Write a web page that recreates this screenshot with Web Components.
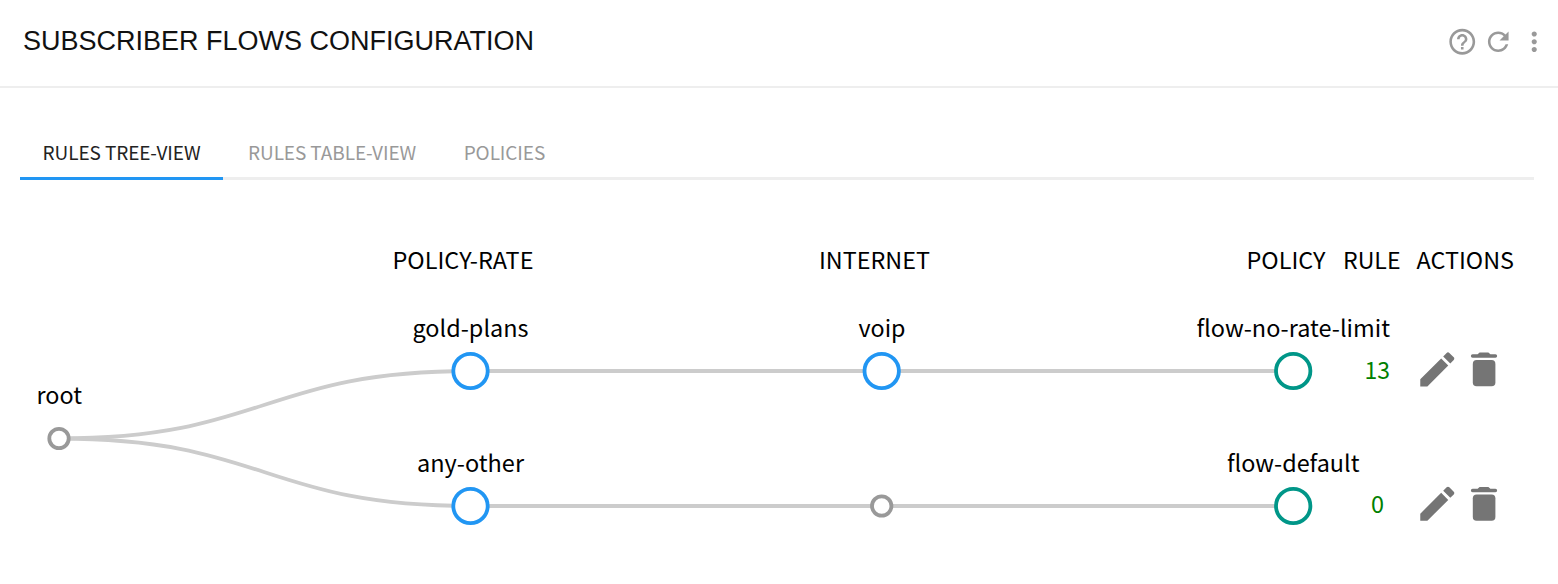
<!DOCTYPE html>
<html lang="en">
<head>
<meta charset="utf-8">
<title>Subscriber Flows Configuration</title>
<style>
  body {
    margin: 0;
    background: #fff;
    font-family: "Noto Sans CJK SC", "Open Sans", sans-serif;
  }
</style>
</head>
<body>
<flows-page>
  <page-header slot="header" heading="SUBSCRIBER FLOWS CONFIGURATION">
    <icon-button name="help" label="Help"></icon-button>
    <icon-button name="refresh" label="Refresh"></icon-button>
    <icon-button name="more" label="More"></icon-button>
  </page-header>
  <tab-bar slot="tabs">
    <tab-item active>RULES TREE-VIEW</tab-item>
    <tab-item>RULES TABLE-VIEW</tab-item>
    <tab-item>POLICIES</tab-item>
  </tab-bar>
  <rules-tree></rules-tree>
</flows-page>

<script>
const ICONS = {
  help: "M11 18h2v-2h-2v2zm1-16C6.48 2 2 6.48 2 12s4.48 10 10 10 10-4.48 10-10S17.52 2 12 2zm0 18c-4.41 0-8-3.59-8-8s3.59-8 8-8 8 3.59 8 8-3.59 8-8 8zm0-14c-2.21 0-4 1.79-4 4h2c0-1.1.9-2 2-2s2 .9 2 2c0 2-3 1.75-3 5h2c0-2.25 3-2.5 3-5 0-2.21-1.79-4-4-4z",
  refresh: "M17.65 6.35C16.2 4.9 14.21 4 12 4c-4.42 0-7.99 3.58-7.99 8s3.57 8 7.99 8c3.73 0 6.84-2.55 7.73-6h-2.08c-.82 2.33-3.04 4-5.65 4-3.31 0-6-2.69-6-6s2.69-6 6-6c1.66 0 3.14.69 4.22 1.78L13 11h7V4l-2.35 2.35z",
  more: "M12 8c1.1 0 2-.9 2-2s-.9-2-2-2-2 .9-2 2 .9 2 2 2zm0 2c-1.1 0-2 .9-2 2s.9 2 2 2 2-.9 2-2-.9-2-2-2zm0 6c-1.1 0-2 .9-2 2s.9 2 2 2 2-.9 2-2-.9-2-2-2z",
};

class FlowsPage extends HTMLElement {
  constructor() {
    super();
    this.attachShadow({ mode: "open" }).innerHTML = `
      <style>
        :host { display: flex; flex-direction: column; height: 584px; overflow: hidden; }
        main { display: flex; flex-direction: column; padding-top: 36px; }
      </style>
      <slot name="header"></slot>
      <main>
        <slot name="tabs"></slot>
        <slot></slot>
      </main>
    `;
  }
}

class PageHeader extends HTMLElement {
  constructor() {
    super();
    this.attachShadow({ mode: "open" }).innerHTML = `
      <style>
        :host {
          display: flex;
          align-items: center;
          justify-content: space-between;
          box-sizing: border-box;
          height: 88px;
          padding: 0 8px 4px 23px;
          border-bottom: 2px solid #eee;
        }
        h1 {
          margin: 0;
          color: #111;
          font: 400 27px/32px "Liberation Sans", Arial, sans-serif;
          white-space: nowrap;
        }
        .actions { display: flex; gap: 5px; padding-top: 1px; }
      </style>
      <h1>${this.getAttribute("heading")}</h1>
      <div class="actions"><slot></slot></div>
    `;
  }
}

class IconButton extends HTMLElement {
  constructor() {
    super();
    this.attachShadow({ mode: "open" }).innerHTML = `
      <style>
        :host { display: block; width: 31px; height: 31px; cursor: pointer; }
        svg { display: block; fill: #999; }
      </style>
      <svg width="31" height="31" viewBox="0.2 -0.2 24 24" role="img" aria-label="${this.getAttribute("label")}">
        <path d="${ICONS[this.getAttribute("name")]}"/>
      </svg>
    `;
  }
}

class TabBar extends HTMLElement {
  constructor() {
    super();
    this.attachShadow({ mode: "open" }).innerHTML = `
      <style>
        :host {
          display: flex;
          gap: 2.4px;
          box-sizing: border-box;
          height: 56px;
          margin: 0 24px 0 20px;
          box-shadow: inset 0 -3px #eee;
        }
      </style>
      <slot></slot>
    `;
  }
}

class TabItem extends HTMLElement {
  constructor() {
    super();
    this.attachShadow({ mode: "open" }).innerHTML = `
      <style>
        :host {
          display: flex;
          align-items: center;
          box-sizing: border-box;
          height: 56px;
          padding: 3px 22.6px 0;
          border-bottom: 3px solid transparent;
          color: #999;
          font-size: 19px;
          line-height: 28px;
          letter-spacing: -0.09px;
          white-space: nowrap;
          cursor: pointer;
        }
        :host([active]) { color: #222; border-color: #2196f3; }
      </style>
      <slot></slot>
    `;
  }
}

const COLUMNS = [
  { text: "POLICY-RATE", x: 392.5, width: 141 },
  { text: "INTERNET", x: 819, width: 111 },
  { text: "POLICY", x: 1246.5, width: 79 },
  { text: "RULE", x: 1343, width: 57.5 },
  { text: "ACTIONS", x: 1416.5, width: 97.5 },
];

const NODES = [
  { text: "root", x: 59, y: 438.5, tx: 36.5, ty: 404, width: 45.5 },
  { text: "gold-plans", x: 470.5, y: 371, tx: 412.5, ty: 337, width: 116, kind: "match" },
  { text: "voip", x: 881.7, y: 371, tx: 858.5, ty: 337, width: 47, kind: "match" },
  { text: "flow-no-rate-limit", x: 1293.2, y: 371, tx: 1196.5, ty: 337, width: 193.5, kind: "policy" },
  { text: "any-other", x: 470.5, y: 506, tx: 417, ty: 472, width: 107, kind: "match" },
  { x: 881.7, y: 506 },
  { text: "flow-default", x: 1293.2, y: 506, tx: 1227, ty: 472, width: 132.5, kind: "policy" },
];

const LINKS = [[0, 1], [1, 2], [2, 3], [0, 4], [4, 5], [5, 6]];

const RULES = [
  { count: "13", x: 1364.5, y: 371, width: 25.5 },
  { count: "0", x: 1371, y: 505.4, width: 13 },
];

class RulesTree extends HTMLElement {
  constructor() {
    super();
    this.attachShadow({ mode: "open" });
  }

  connectedCallback() {
    this._render();
  }

  _text(text, x, y, width, clase = "") {
    return `<text class="${clase}" x="${x}" y="${y}" textLength="${width}" lengthAdjust="spacingAndGlyphs">${text}</text>`;
  }

  _link([from, to]) {
    const a = NODES[from];
    const b = NODES[to];
    const mid = (a.x + b.x) / 2;
    return `<path class="link" d="M${a.x} ${a.y}C${mid} ${a.y} ${mid} ${b.y} ${b.x} ${b.y}"/>`;
  }

  _node(n) {
    const r = n.kind ? 17.2 : 9.7;
    const label = n.text ? this._text(n.text, n.tx, n.ty, n.width) : "";
    return `<circle class="${n.kind || ""}" cx="${n.x}" cy="${n.y}" r="${r}"/>${label}`;
  }

  _rule(r) {
    return `
      ${this._text(r.count, r.x, Math.floor(r.y + 8), r.width, "count")}
      <g class="action" transform="translate(1414.6 ${r.y - 24.3}) scale(1.89)">
        <path d="M3 17.25V21h3.75L17.81 9.94l-3.75-3.75L3 17.25zM20.71 7.04c.39-.39.39-1.02 0-1.41l-2.34-2.34c-.39-.39-1.02-.39-1.41 0l-1.83 1.83 3.75 3.75 1.83-1.83z"/>
      </g>
      <g class="action" transform="translate(1471 ${r.y - 18.5})">
        <path d="M8.6 0h8.8l2 1.8H24.4a1.75 1.75 0 0 1 0 3.5H1.6a1.75 1.75 0 0 1 0-3.5h5z"/>
        <rect x="1.8" y="7.6" width="22.6" height="26.2" rx="3.8"/>
      </g>`;
  }

  _render() {
    this.shadowRoot.innerHTML = `
      <style>
        :host { display: block; }
        svg { display: block; }
        text { font-size: 23px; fill: #000; }
        .link { fill: none; stroke: #ccc; stroke-width: 3.8; }
        circle { fill: #fff; stroke: #999; stroke-width: 3.8; }
        .match { stroke: #2196f3; }
        .policy { stroke: #009688; }
        .count { fill: green; }
        .action { fill: #757575; cursor: pointer; }
      </style>
      <svg width="1558" height="404" viewBox="0 180 1558 404">
        ${COLUMNS.map((c) => this._text(c.text, c.x, 269, c.width)).join("")}
        ${LINKS.map((l) => this._link(l)).join("")}
        ${NODES.map((n) => this._node(n)).join("")}
        ${RULES.map((r) => this._rule(r)).join("")}
      </svg>
    `;
  }
}

customElements.define("flows-page", FlowsPage);
customElements.define("page-header", PageHeader);
customElements.define("icon-button", IconButton);
customElements.define("tab-bar", TabBar);
customElements.define("tab-item", TabItem);
customElements.define("rules-tree", RulesTree);
</script>
</body>
</html>
